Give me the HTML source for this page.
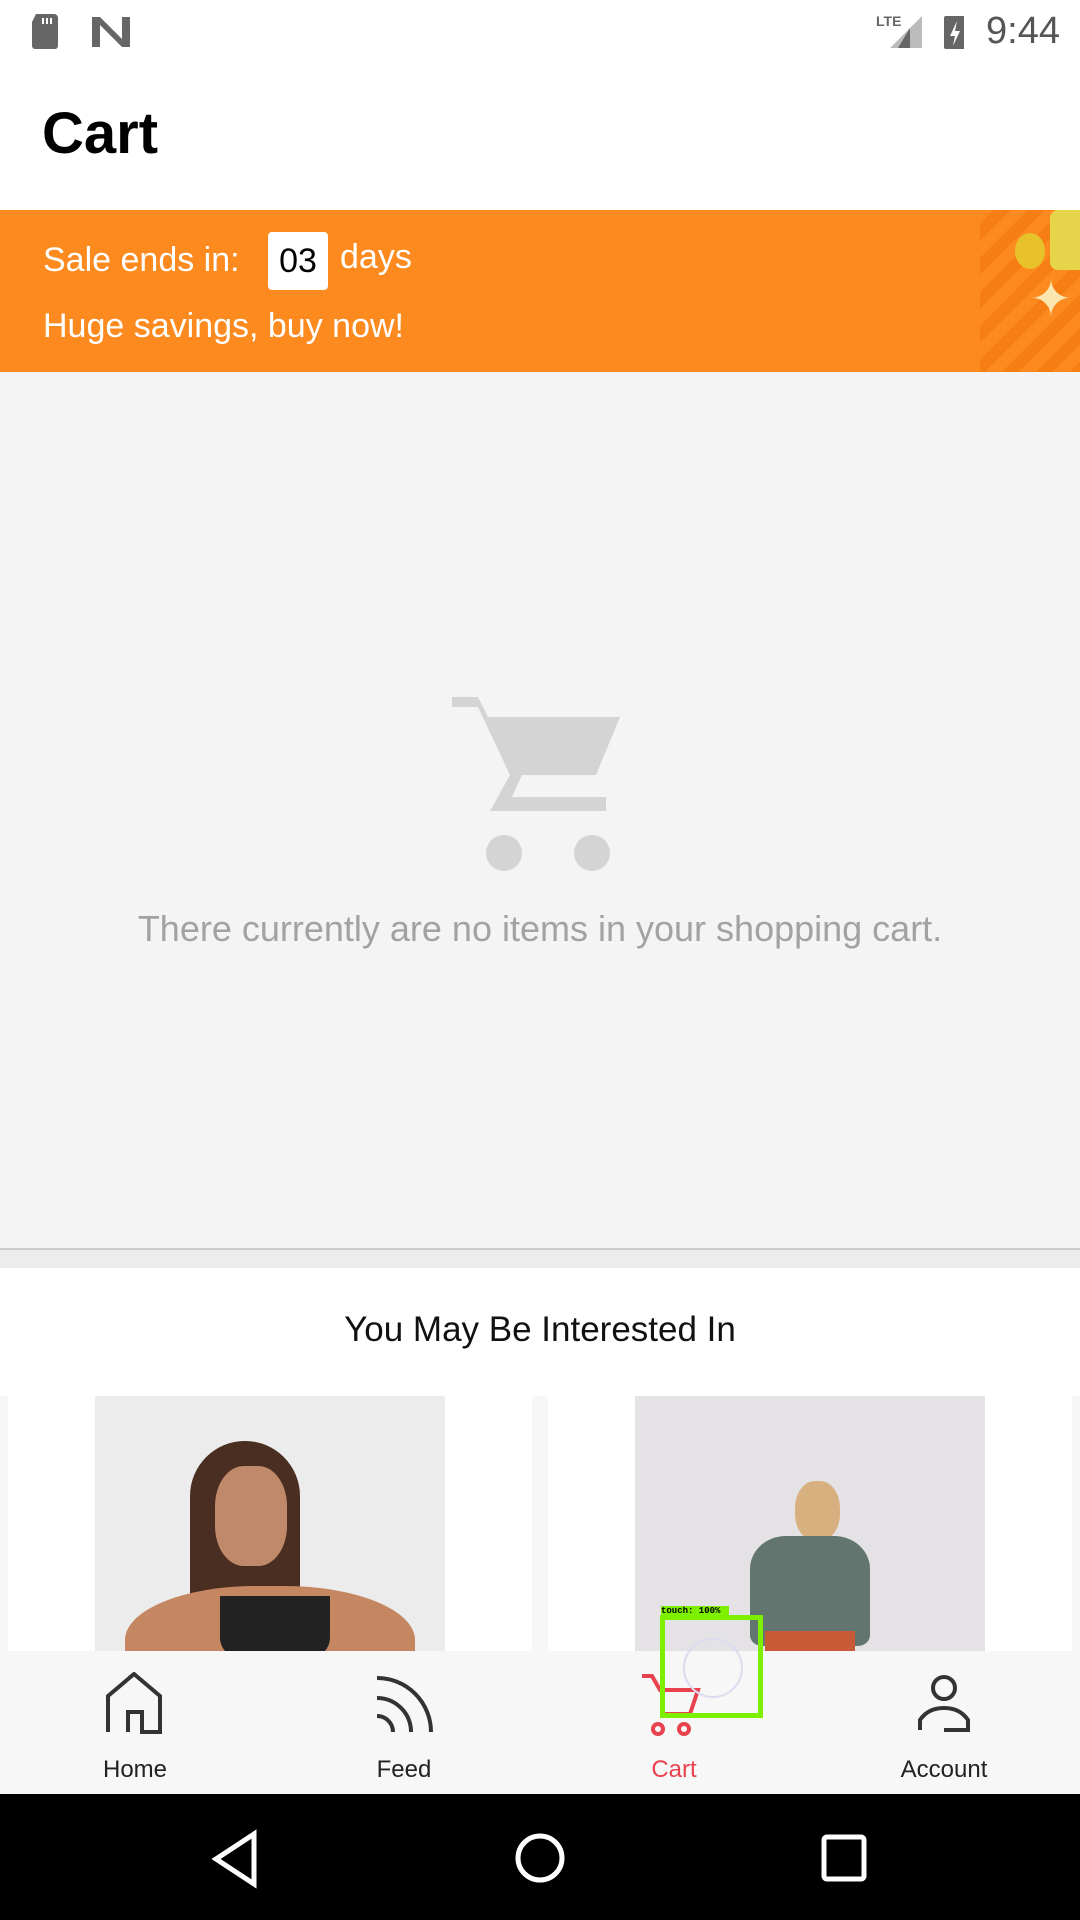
<!DOCTYPE html>
<html><head><meta charset="utf-8"><style>
*{margin:0;padding:0;box-sizing:border-box}
body{width:1080px;height:1920px;position:relative;overflow:hidden;background:#fff;font-family:"Liberation Sans",Roboto,sans-serif}
.abs{position:absolute}
</style></head><body>
<!-- status bar -->
<div class="abs" style="left:0;top:0;width:1080px;height:70px;background:#fff"></div>
<svg class="abs" style="left:30px;top:12px" width="110" height="40" viewBox="0 0 110 40">
<path d="M6 2h18a4 4 0 0 1 4 4v28a3 3 0 0 1-3 3H5a3 3 0 0 1-3-3V10z" fill="#666"/>
<rect x="12" y="6" width="2" height="6" fill="#fff"/><rect x="16" y="6" width="2" height="6" fill="#fff"/><rect x="20" y="6" width="2" height="6" fill="#fff"/>
<path d="M62 5h8l22 22V5h8v30h-8L70 13v22h-8z" fill="#666"/>
</svg>
<svg class="abs" style="left:874px;top:12px" width="90" height="40" viewBox="0 0 90 40">
<text x="2" y="14" font-size="14" font-family="Liberation Sans" font-weight="bold" fill="#666">LTE</text>
<path d="M48 4v32H16z" fill="#bbb"/><path d="M36 16v20H24z" fill="#666"/>
<rect x="70" y="4" width="22" height="33" rx="2" fill="#666"/>
<path d="M83 9l-7 15h5l-2 10 7-15h-5z" fill="#fff"/>
</svg>
<div class="abs" style="left:986px;top:10px;font-size:38px;color:#555">9:44</div>
<!-- title -->
<div class="abs" style="left:42px;top:100px;font-size:58px;font-weight:bold;color:#000">Cart</div>
<!-- banner -->
<div class="abs" style="left:0;top:210px;width:1080px;height:162px;background:#fd8a1f;overflow:hidden">
<div class="abs" style="left:980px;top:-20px;width:140px;height:200px;background:repeating-linear-gradient(135deg,#f57c12 0 12px,#fd8a1f 12px 24px);opacity:.9"></div>
<div class="abs" style="left:1015px;top:23px;width:30px;height:36px;border-radius:50%;background:#e8c22a"></div>
<div class="abs" style="left:1050px;top:0;width:40px;height:60px;background:#e6d54a;border-radius:8px"></div>
<div class="abs" style="left:1030px;top:60px;font-size:50px;color:#fbe6b0">✦</div>
<div class="abs" style="left:43px;top:31px;font-size:34px;color:#fff">Sale ends in:</div>
<div class="abs" style="left:268px;top:22px;width:60px;height:58px;background:#fff;border-radius:4px;color:#000;font-size:34px;text-align:center;line-height:58px">03</div>
<div class="abs" style="left:340px;top:28px;font-size:34px;color:#fff">days</div>
<div class="abs" style="left:43px;top:97px;font-size:34px;color:#fff">Huge savings, buy now!</div>
</div>
<!-- empty area -->
<div class="abs" style="left:0;top:372px;width:1080px;height:876px;background:#f4f4f4"></div>
<svg class="abs" style="left:450px;top:695px" width="180" height="180" viewBox="0 0 180 180">
<path d="M2 2h26l10 20h132l-24 58H72l-10 22h94v14H40l20-36L28 12H2z" fill="#d4d4d4"/>
<circle cx="54" cy="158" r="18" fill="#d4d4d4"/><circle cx="142" cy="158" r="18" fill="#d4d4d4"/>
</svg>
<div class="abs" style="left:0;top:908px;width:1080px;text-align:center;font-size:36px;color:#a2a2a2">There currently are no items in your shopping cart.</div>
<div class="abs" style="left:0;top:1248px;width:1080px;height:2px;background:#ccc"></div>
<div class="abs" style="left:0;top:1250px;width:1080px;height:18px;background:#ececec"></div>
<!-- recommendations -->
<div class="abs" style="left:0;top:1310px;width:1080px;text-align:center;font-size:35px;color:#111">You May Be Interested In</div>
<div class="abs" style="left:0;top:1396px;width:1080px;height:260px;background:#f7f7f7"></div>
<div class="abs" style="left:8px;top:1396px;width:524px;height:260px;background:#fff"></div>
<div class="abs" style="left:548px;top:1396px;width:524px;height:260px;background:#fff"></div>
<div class="abs" style="left:95px;top:1396px;width:350px;height:256px;background:#ececec;overflow:hidden">
<div class="abs" style="left:95px;top:45px;width:110px;height:240px;border-radius:55px 55px 10px 10px;background:#4a2e22"></div>
<div class="abs" style="left:120px;top:70px;width:72px;height:100px;border-radius:40%;background:#c08a6a"></div>
<div class="abs" style="left:30px;top:190px;width:290px;height:120px;border-radius:45% 45% 0 0;background:#c48762"></div>
<div class="abs" style="left:125px;top:200px;width:110px;height:70px;background:#222;border-radius:0 0 40% 40%"></div>
</div>
<div class="abs" style="left:635px;top:1396px;width:350px;height:256px;background:#e4e2e4;overflow:hidden">
<div class="abs" style="left:160px;top:85px;width:45px;height:60px;border-radius:45%;background:#d8b080"></div>
<div class="abs" style="left:115px;top:140px;width:120px;height:110px;border-radius:30% 30% 10% 10%;background:#62756e"></div>
<div class="abs" style="left:130px;top:235px;width:90px;height:40px;background:#c85a35"></div>
</div>
<!-- bottom nav -->
<div class="abs" style="left:0;top:1651px;width:1080px;height:143px;background:#f7f7f7"></div>
<svg class="abs" style="left:104px;top:1672px" width="60" height="64" viewBox="0 0 60 64"><path d="M4 60V24L30 2l26 22v36H38V40H24v20" fill="none" stroke="#333" stroke-width="4"/></svg>
<svg class="abs" style="left:375px;top:1672px" width="60" height="64" viewBox="0 0 60 64"><g fill="none" stroke="#333" stroke-width="4"><path d="M2 6a54 54 0 0 1 54 54"/><path d="M2 26a34 34 0 0 1 34 34"/><path d="M2 44a16 16 0 0 1 16 16"/></g></svg>
<svg class="abs" style="left:640px;top:1672px" width="66" height="66" viewBox="0 0 66 66"><g fill="none" stroke="#e8424f" stroke-width="4"><path d="M2 4h10l8 14h38l-8 24H22"/><circle cx="18" cy="57" r="5"/><circle cx="44" cy="57" r="5"/></g></svg>
<svg class="abs" style="left:914px;top:1672px" width="60" height="64" viewBox="0 0 60 64"><g fill="none" stroke="#333" stroke-width="4"><circle cx="30" cy="16" r="11"/><path d="M6 58V48q8-12 24-12t24 12v10H30"/></g></svg>
<div class="abs" style="left:35px;top:1756px;width:200px;text-align:center;font-size:24px;color:#222">Home</div>
<div class="abs" style="left:304px;top:1756px;width:200px;text-align:center;font-size:24px;color:#222">Feed</div>
<div class="abs" style="left:574px;top:1756px;width:200px;text-align:center;font-size:24px;color:#e8424f">Cart</div>
<div class="abs" style="left:844px;top:1756px;width:200px;text-align:center;font-size:24px;color:#222">Account</div>
<!-- touch overlay -->
<div class="abs" style="left:660px;top:1615px;width:103px;height:103px;border:5px solid #7df000"></div>
<div class="abs" style="left:661px;top:1606px;width:68px;height:11px;background:#7df000;font-size:9px;font-family:'Liberation Mono',monospace;font-weight:bold;color:#000;line-height:11px">touch: 100%</div>
<div class="abs" style="left:683px;top:1638px;width:60px;height:60px;border:2px solid #dcdcf0;border-radius:50%"></div>
<!-- system nav -->
<div class="abs" style="left:0;top:1794px;width:1080px;height:126px;background:#000"></div>
<svg class="abs" style="left:0;top:1794px" width="1080" height="126" viewBox="0 0 1080 126">
<g fill="none" stroke="#fff" stroke-width="5"><path d="M254 40v50l-38-25z"/><circle cx="540" cy="64" r="22"/><rect x="824" y="43" width="40" height="42" rx="3"/></g>
</svg>
</body></html>
